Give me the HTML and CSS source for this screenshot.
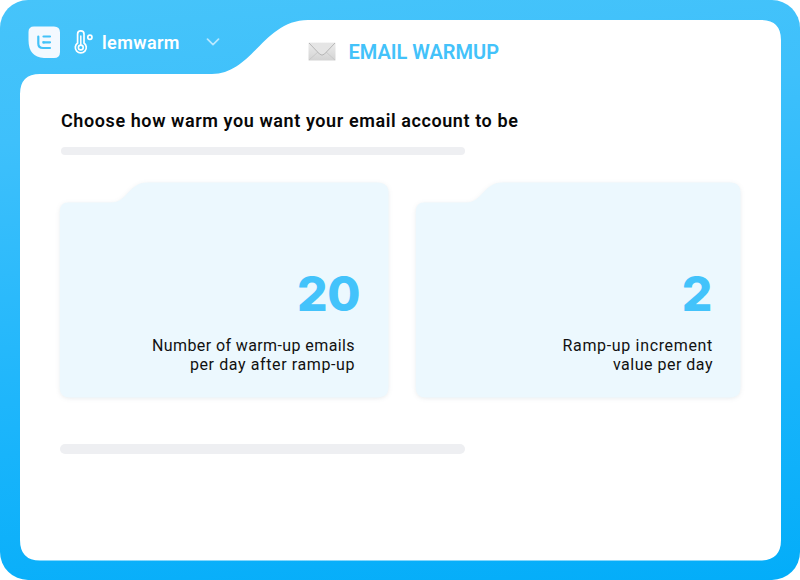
FILE: index.html
```html
<!DOCTYPE html>
<html lang="en">
<head>
<meta charset="utf-8">
<title>Email warmup</title>
<link rel="stylesheet" href="styles.css">
</head>
<body>
<div class="frame">
  <svg class="frame-shape" viewBox="0 0 800 580" aria-hidden="true">
    <path d="M40 74H212C252 74 264 20 308 20H761Q781 20 781 40V540Q781 560.500 760 560.500H40Q20 560.500 20 540V94Q20 74 40 74Z" fill="#fff"/>
  </svg>
  <header class="header">
    <div class="brand">
      <svg class="logo" viewBox="0 0 33 33" aria-hidden="true">
        <path d="M6 .5H26Q32 .5 32 6.500V26Q32 32 26 32H16Q.5 31 .5 14V6Q.5 .5 6 .5Z" fill="#f3f9ff"/>
        <path d="M10.300 10.500V17.500Q10.300 22 15 22H22M15.500 10.500H22M22 16.300H15.500" fill="none" stroke="#43c2f8" stroke-width="2.200" stroke-linecap="round" stroke-linejoin="round"/>
        <path d="M15.500 15.200V17.500" stroke="#43c2f8" stroke-width="2"/>
      </svg>
      <svg class="thermo" viewBox="0 0 20 26" fill="none" stroke="#fff" aria-hidden="true">
        <path d="M3.600 14V5A3.200 3.200 0 0 1 10 5V14A5.500 5.500 0 1 1 3.600 14Z" stroke-width="1.700"/>
        <path d="M6.800 7V15.500" stroke-width="1.500" stroke-linecap="round"/>
        <circle cx="6.800" cy="18.500" r="2.400" stroke-width="1.600"/>
        <circle cx="15.900" cy="8.200" r="2.100" stroke-width="1.700"/>
      </svg>
      <span class="brand-name">lemwarm</span>
      <svg class="chevron" viewBox="0 0 14 8" aria-hidden="true"><path d="M1.500 1.200L7 6.700L12.500 1.200" fill="none" stroke="#b8e8ff" stroke-width="1.700" stroke-linecap="round" stroke-linejoin="round"/></svg>
    </div>
    <div class="title">
      <svg class="mail" viewBox="0 0 28 19" aria-hidden="true">
        <defs><linearGradient id="paper" x2="0" y2="1"><stop stop-color="#ececec"/><stop offset="1" stop-color="#d3d3d3"/></linearGradient></defs>
        <rect x=".5" y=".5" width="27" height="18" rx=".6" fill="url(#paper)"/>
        <path d="M1 18L10 10M27 18L18 10" stroke="#c2c2c2" stroke-width=".7"/>
        <path d="M1 1L11.500 12Q14 14.300 16.500 12L27 1Z" fill="#e5e5e5"/>
        <path d="M1 1L11.500 12Q14 14.300 16.500 12L27 1" fill="none" stroke="#b0b0b0" stroke-width=".9"/>
      </svg>
      <span class="title-text">EMAIL WARMUP</span>
    </div>
  </header>
  <main class="content">
    <h1 class="heading">Choose how warm you want your email account to be</h1>
    <div class="bar"></div>
    <div class="cards">
      <section class="card">
        <svg class="card-shape" viewBox="0 0 330 217" aria-hidden="true"><path d="M9 20.500H52C69 20.500 69 .5 89 .5H318Q329.500 .5 329.500 11V205Q329.500 215.500 318 215.500H11Q.8 215.500 .8 206V30Q.8 20.500 9 20.500Z"/></svg>
        <div class="number">20</div>
        <p class="label label-emails">Number of warm-up emails<br><span class="wide">per day after ramp-up</span></p>
      </section>
      <section class="card">
        <svg class="card-shape" viewBox="0 0 326 217" aria-hidden="true"><path d="M9 20.500H51C68 20.500 68 .5 88 .5H315Q325.500 .5 325.500 11V205Q325.500 215.500 315 215.500H11Q.8 215.500 .8 206V30Q.8 20.500 9 20.500Z"/></svg>
        <div class="number">2</div>
        <p class="label label-increment">Ramp-up increment<br><span class="narrow">value per day</span></p>
      </section>
    </div>
    <div class="bar bar-lower"></div>
  </main>
</div>
</body>
</html>
```
FILE: styles.css
```css
* { box-sizing: border-box; }
body { margin: 0; background: #fff; font-family: Roboto, "Liberation Sans", sans-serif; }
.frame {
  position: relative;
  width: 800px;
  height: 580px;
  border-radius: 28px;
  background: linear-gradient(175deg, #46c4fa 0%, #3ec0fb 22%, #18b4fb 70%, #03adf9 100%);
  overflow: hidden;
}
.frame-shape, .card-shape { position: absolute; inset: 0; width: 100%; height: 100%; }
.header { position: relative; display: flex; height: 84px; }
.brand { display: flex; align-items: center; width: 308px; padding-left: 28px; }
.logo { width: 33px; height: 33px; }
.thermo { width: 20px; height: 26px; margin-left: 13px; }
.brand-name { width: 82px; margin-left: 8px; padding-top: 1px; color: #fff; font-size: 18px; font-weight: 600; line-height: 24px; letter-spacing: 0.4px; }
.chevron { width: 14px; height: 8px; margin-left: 22px; }
.title { display: flex; align-items: center; gap: 12.500px; padding-top: 19px; height: 84px; }
.mail { width: 28px; height: 19px; }
.title-text { color: #43c2fa; font-size: 20px; font-weight: 600; line-height: 24px; }
.content { position: relative; padding: 25px 59px 0; }
.heading { margin: 0 0 14px 2px; color: #080808; font-size: 18px; font-weight: 600; line-height: 24px; letter-spacing: 0.59px; white-space: nowrap; }
.bar { width: 404px; height: 8px; margin-left: 2px; border-radius: 4px; background: #eeeff2; }
.cards { display: grid; grid-template-columns: 330px 326px; gap: 26px; margin-top: 27px; }
.card { position: relative; height: 217px; padding: 84px 29px 0; text-align: right; }
.card-shape { overflow: visible; fill: #ecf8fe; filter: drop-shadow(0 1px 2px rgba(40, 70, 90, 0.1)); }
.number { position: relative; color: #43c3fb; font-family: Inter, sans-serif; font-size: 48px; font-weight: 850; line-height: 56px; letter-spacing: -0.4px; }
.label { position: relative; margin: 14px 0 0; color: #111; font-size: 16px; line-height: 19px; letter-spacing: 0.4px; }
.label-emails { margin-right: 5px; }
.label-increment { margin-right: -1px; letter-spacing: 0.66px; }
.wide { letter-spacing: 0.6px; }
.narrow { letter-spacing: 0.5px; }
.bar-lower { width: 405px; height: 10px; margin: 45px 0 0 1px; border-radius: 5px; }
```
